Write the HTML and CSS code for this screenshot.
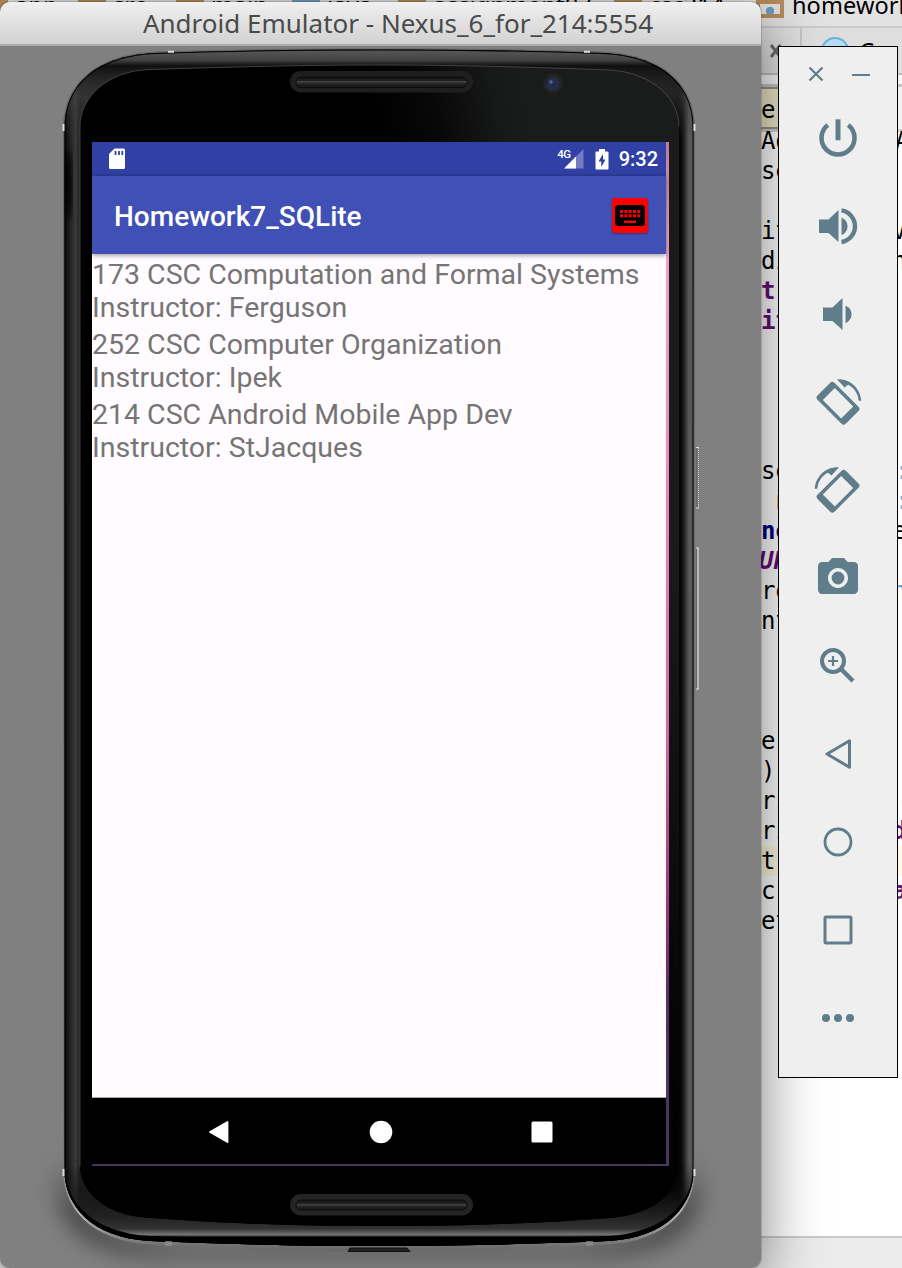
FILE: index.html
```html
<!DOCTYPE html>
<html lang="en">
<head>
<meta charset="utf-8">
<title>Android Emulator</title>
<link rel="stylesheet" href="styles.css">
</head>
<body>
<div class="desktop">
  <div class="ide">
    <div class="crumbs">
      <span class="crumb crumb-app">app</span><span class="crumb crumb-src">src</span><span class="crumb crumb-main">main</span><span class="crumb crumb-java java">java</span><span class="crumb crumb-pkg">assignment07</span><span class="crumb crumb-csc">csc214</span><span class="crumb crumb-last">homework</span>
    </div>
    <div class="tabs">
      <span class="tab-close"><svg width="12" height="14" viewBox="0 0 12 14"><path d="M1 1l9.500 12M10.500 1L1 13" stroke="#6b6b6b" stroke-width="3" fill="none"/></svg></span>
      <span class="tab"><i class="class-dot"></i>C</span>
    </div>
    <div class="gap-bar"></div>
    <div class="method-bar"><span class="method">e</span></div>
    <div class="code">
      <div class="line"><span>Ad</span><span>Ac</span></div>
      <div class="line"><span>se</span><span class="nudge">r</span></div>
      <div class="line"></div>
      <div class="line"><span>it</span><span class="back">V</span></div>
      <div class="line"><span>di</span><span class="back">nV</span></div>
      <div class="line"><span class="field">t</span><span class="nudge">'c</span></div>
      <div class="line"><span class="field">it</span><span class="nudge">'T</span></div>
      <div class="line"></div><div class="line"></div><div class="line"></div><div class="line"></div>
      <div class="line"><span>se</span><span class="str">:</span></div>
      <div class="line"><span>&nbsp;n</span><span class="str">:</span></div>
      <div class="line"><span class="kw">ne</span><span class="back">e</span></div>
      <div class="line"><span class="const">UR</span><span class="red nudge">r</span></div>
      <div class="line"><span>rg</span><span class="str back">n</span></div>
      <div class="line"><span>nt</span></div>
      <div class="line"></div><div class="line"></div><div class="line"></div>
      <div class="line"><span>e</span></div>
      <div class="line"><span>)</span></div>
      <div class="line"><span>rs</span><span class="tan nudge">c</span></div>
      <div class="line"><span>rs</span><span class="field back">da</span></div>
      <div class="line current"><span>t</span><span class="tan nudge">r</span></div>
      <div class="line"><span>c</span><span class="field back">al</span></div>
      <div class="line"><span>et</span></div>
    </div>
    <div class="ide-status"></div>
  </div>

  <div class="emulator">
    <div class="titlebar"><span class="title">Android Emulator - Nexus_6_for_214:5554</span></div>
    <div class="stage">
      <svg class="body" width="761" height="1223" viewBox="0 45 761 1223">
        <defs>
          <linearGradient id="side" gradientUnits="userSpaceOnUse" x1="64" y1="0" x2="694" y2="0">
            <stop offset="0" stop-color="#050505"/><stop offset=".006" stop-color="#161616"/><stop offset=".018" stop-color="#3a3a3a"/><stop offset=".025" stop-color="#222"/>
            <stop offset=".5" stop-color="#111"/><stop offset=".975" stop-color="#000"/><stop offset=".982" stop-color="#111"/><stop offset=".992" stop-color="#5c5a58"/><stop offset="1" stop-color="#555"/>
          </linearGradient>
          <linearGradient id="ends" gradientUnits="userSpaceOnUse" x1="0" y1="49" x2="0" y2="1248">
            <stop offset="0" stop-color="#5a5a5a"/><stop offset=".009" stop-color="#444"/><stop offset=".014" stop-color="#101010"/><stop offset=".04" stop-color="#444" stop-opacity=".5"/><stop offset=".075" stop-color="#333" stop-opacity="0"/>
            <stop offset=".93" stop-color="#000" stop-opacity="0"/><stop offset=".974" stop-color="#222"/><stop offset=".984" stop-color="#333"/><stop offset=".989" stop-color="#777"/><stop offset=".991" stop-color="#000"/><stop offset="1" stop-color="#000"/>
          </linearGradient>
          <linearGradient id="glass" gradientUnits="userSpaceOnUse" x1="380" y1="150" x2="530" y2="120">
            <stop offset="0" stop-color="#000"/><stop offset=".4" stop-color="#070807"/><stop offset=".8" stop-color="#171918"/><stop offset="1" stop-color="#1a1c1b"/>
          </linearGradient>
          <linearGradient id="glassFade" x1="0" y1="0" x2="0" y2="1">
            <stop offset=".4" stop-color="#000" stop-opacity="0"/><stop offset=".85" stop-color="#000" stop-opacity=".85"/><stop offset="1" stop-color="#000"/>
          </linearGradient>
          <linearGradient id="rim" x1="0" y1="0" x2="0" y2="1">
            <stop offset="0" stop-color="#666"/><stop offset=".93" stop-color="#777"/><stop offset=".97" stop-color="#b5b5b5"/><stop offset="1" stop-color="#666"/>
          </linearGradient>
          <linearGradient id="grille" x1="0" y1="0" x2="0" y2="1">
            <stop offset="0" stop-color="#111"/><stop offset=".35" stop-color="#222"/><stop offset=".4" stop-color="#464646"/><stop offset=".7" stop-color="#202020"/><stop offset="1" stop-color="#151515"/>
          </linearGradient>
          <filter id="soft" x="-20%" y="-60%" width="140%" height="220%"><feGaussianBlur stdDeviation="12"/></filter>
          <filter id="tiny" x="-10%" y="-10%" width="120%" height="120%"><feGaussianBlur stdDeviation="4"/></filter>
          <clipPath id="shell"><path d="M64.500 128C64.500 88 92 56 155 53C230 50.500 300 49.500 379 49.500S528 50.500 603 53C666 56 693.500 88 693.500 128V1170C693.500 1205 667 1238 608 1241C530 1244 460 1246 379 1246S228 1244 150 1241C91 1238 64.500 1205 64.500 1170Z"/></clipPath>
        </defs>
        <path d="M62 1155C72 1225 110 1242 180 1247H578C648 1242 686 1225 696 1155V1205Q680 1253 590 1254H168Q78 1253 62 1205Z" fill="#000" opacity=".65" filter="url(#soft)"/>
        <path d="M63 128C63 87 91 55 155 51.500C230 49 300 48.500 379 48.500S528 49 603 51.500C667 55 695 87 695 128V1170C695 1207 668 1241 608 1244.500C530 1248 460 1251 379 1251S228 1248 150 1244.500C90 1241 63 1207 63 1170Z" fill="url(#rim)"/>
        <g clip-path="url(#shell)">
          <rect x="64" y="49" width="630" height="1200" fill="url(#side)"/>
          <rect x="64" y="49" width="630" height="1200" fill="url(#ends)"/>
          <ellipse cx="67" cy="185" rx="5" ry="36" fill="#000" filter="url(#tiny)"/>
          <path d="M64.500 128C64.500 88 92 56 155 53C230 50.500 300 49.500 379 49.500S528 50.500 603 53C666 56 693.500 88 693.500 128V1170C693.500 1205 667 1238 608 1241C530 1244 460 1246 379 1246S228 1244 150 1241C91 1238 64.500 1205 64.500 1170Z" fill="none" stroke="#000" stroke-width="2"/>
          <path d="M64 1168C66 1203 94 1233 150 1236C228 1238 300 1239.500 379 1239.500S530 1238 608 1236C664 1233 692 1203 694 1168V1250H64Z" fill="#000"/>
        </g>
        <path d="M80 126C80 100 104 71 150 69.500C230 67 300 65 379 65S528 67 610 70C654 73 679 100 679 126V1166C679 1192 655 1214 610 1218C530 1224 460 1226 379 1226S228 1224 140 1217C103 1213 80 1190 80 1166Z" fill="url(#glass)"/>
        <path d="M80 126C80 100 104 71 150 69.500C230 67 300 65 379 65S528 67 610 70C654 73 679 100 679 126V1166C679 1192 655 1214 610 1218C530 1224 460 1226 379 1226S228 1224 140 1217C103 1213 80 1190 80 1166Z" fill="url(#glassFade)"/>
        <path d="M80 1166V126C80 100 104 71 150 69.500C230 67 300 65 379 65S528 67 610 70C654 73 679 100 679 126" fill="none" stroke="#555" stroke-width="1" opacity=".7"/>
        <rect x="290" y="71" width="183" height="21.500" rx="10.700" fill="#1f1f1f"/>
        <rect x="296" y="77" width="171" height="10.500" rx="5" fill="url(#grille)" stroke="#0c0c0c"/>
        <rect x="290" y="1194" width="183" height="21.500" rx="10.700" fill="#242424"/>
        <rect x="296" y="1200" width="171" height="10" rx="5" fill="url(#grille)" stroke="#0c0c0c"/>
        <circle cx="553" cy="83.500" r="10" fill="#222423"/><circle cx="553" cy="84" r="6.700" fill="#252d49"/><circle cx="551" cy="82" r="1.800" fill="#4e6699"/>
        <path d="M168 51.700h6M584 51.700h6M63.500 124v7M694.500 124v7M63.500 1169v7M694.500 1169v7" stroke="#ddd" stroke-width="2"/>
        <path d="M165 1243.500h7M586 1243.500h7" stroke="#888" stroke-width="4.500"/>
        <path d="M348 1251.500L350 1248H407L410 1251.500Z" fill="#222" stroke="#111"/>
        <path d="M696.500 448V508M696.500 548V689" stroke="#666" stroke-width="1.500"/>
        <path d="M698.500 448V508" stroke="#ccc" stroke-width="1" stroke-dasharray="1 1"/>
        <path d="M698 548V689M696 447.500h3M696 508h3M696 548h3M696 689h3" stroke="#e2e2e2" stroke-width="1.200"/>
      </svg>

      <div class="screen">
        <div class="display">
          <div class="status">
            <svg width="18" height="22" viewBox="0 0 18 22"><path d="M6.500 .5H15.500Q17 .5 17 2V19.500Q17 21 15.500 21H2.500Q1 21 1 19.500V6Z" fill="#fff"/><path d="M7.500 3v4M11 3v4M14.300 3v4" stroke="#3040a0" stroke-width="1.800"/></svg>
            <span class="net">4G</span>
            <svg class="signal" width="21" height="20" viewBox="0 0 21 20"><path d="M20.500 0V19.500H1Z" fill="#737cc0"/><path d="M13 7.500V19.500H1Z" fill="#fff"/></svg>
            <svg class="battery" width="14" height="21" viewBox="0 0 14 21"><path d="M4 0H10V2.500H12.500Q13.500 2.500 13.500 3.500V19.500Q13.500 20.500 12.500 20.500H1.500Q.5 20.500 .5 19.500V3.500Q.5 2.500 1.500 2.500H4Z" fill="#fff"/><path d="M8 5L3.500 12.500H6.300V18L10.500 10.500H8Z" fill="#3040a0"/></svg>
            <span class="clock">9:32</span>
          </div>
          <div class="appbar">
            <span class="app-name">Homework7_SQLite</span>
            <span class="key-btn"><svg width="30" height="21" viewBox="0 0 30 21"><rect width="30" height="21" rx="3.500" fill="#000"/><path d="M5 6.500H26M5 10.700H26" stroke="#f00" stroke-width="3" stroke-dasharray="3 1.350"/><path d="M9 16.700H21" stroke="#f00" stroke-width="2.600"/></svg></span>
          </div>
          <div class="list">
            <div class="course"><div>173 CSC Computation and Formal Systems</div><div>Instructor: Ferguson</div></div>
            <div class="course"><div>252 CSC Computer Organization</div><div>Instructor: Ipek</div></div>
            <div class="course"><div>214 CSC Android Mobile App Dev</div><div>Instructor: StJacques</div></div>
          </div>
          <div class="nav">
            <svg width="22" height="24" viewBox="0 0 22 24"><path d="M2 12L19.500 2V22Z" fill="#fff" stroke="#fff" stroke-width="1.800" stroke-linejoin="round"/></svg>
            <svg width="24" height="24" viewBox="0 0 24 24"><circle cx="12" cy="12" r="11.300" fill="#fff"/></svg>
            <svg width="22" height="22" viewBox="0 0 22 22"><rect x=".5" y=".5" width="21" height="21" rx="1.500" fill="#fff"/></svg>
          </div>
        </div>
      </div>
    </div>
  </div>

  <div class="tools">
    <div class="tools-head">
      <svg width="16" height="16" viewBox="0 0 16 16"><path d="M1.500 1.500l13 13M14.500 1.500l-13 13" stroke="#607d8b" stroke-width="2.200"/></svg>
      <svg width="18" height="16" viewBox="0 0 18 16"><path d="M0 9H18" stroke="#607d8b" stroke-width="2"/></svg>
    </div>
    <div class="tool"><svg viewBox="0 0 48 48"><path class="s" stroke-width="4.600" d="M13.800 11A16.500 16.500 0 1 0 34.200 11"/><path class="s" stroke-width="5" d="M24 5.300V26.300"/></svg></div>
    <div class="tool"><svg viewBox="0 0 48 48"><path d="M5 17.500H14.500L24.500 8V40L14.500 31H5Z"/><path d="M27.500 15.500C31 17 33.500 20 33.500 24.200S31 31.500 27.500 33Z"/><path class="s" stroke-width="4.400" d="M27.500 8.400A16 16 0 0 1 27.500 40"/></svg></div>
    <div class="tool"><svg viewBox="0 0 48 48"><path d="M9 17.500H18.500L28.500 8V40L18.500 31H9Z"/><path d="M31.500 15.500C35 17 37.500 20 37.500 24.200S35 31.500 31.500 33Z"/></svg></div>
    <div class="tool"><svg viewBox="0 0 48 48"><g id="rotate"><path fill-rule="evenodd" transform="translate(24 25.200) rotate(45)" d="M-17 -12H17Q20 -12 20 -9V9Q20 12 17 12H-17Q-20 12 -20 9V-9Q-20 -12 -17 -12ZM-13 -8.500V8.500H13V-8.500Z"/><path d="M23 1.300C35 .5 46 9 47.300 22.700H44.700C44 15 39.500 9 34 6.700L30.500 9.500Z"/></g></svg></div>
    <div class="tool"><svg viewBox="0 0 48 48"><use href="#rotate" transform="translate(48 0) scale(-1 1)"/></svg></div>
    <div class="tool"><svg viewBox="0 0 24 24"><circle cx="12" cy="12" r="3.200"/><path d="M9 2L7.170 4H4c-1.100 0-2 .9-2 2v12c0 1.100.9 2 2 2h16c1.100 0 2-.9 2-2V6c0-1.100-.9-2-2-2h-3.170L15 2H9zm3 15c-2.760 0-5-2.240-5-5s2.240-5 5-5 5 2.240 5 5-2.240 5-5 5z"/></svg></div>
    <div class="tool"><svg viewBox="0 0 48 48"><circle class="s" cx="19" cy="19" r="11" stroke-width="4"/><path class="s" stroke-width="4.400" d="M26.500 26.500L39 39"/><path class="s" stroke-width="2.200" d="M14 19H24M19 14V24"/></svg></div>
    <div class="tool"><svg viewBox="0 0 48 48"><path class="s" stroke-width="3" stroke-linejoin="round" d="M13 24L35.500 10.800V37.200Z"/></svg></div>
    <div class="tool"><svg viewBox="0 0 48 48"><circle class="s" cx="24" cy="24" r="13" stroke-width="2.800"/></svg></div>
    <div class="tool"><svg viewBox="0 0 48 48"><rect class="s" x="11" y="11" width="26" height="26" rx="1" stroke-width="3"/></svg></div>
    <div class="tool"><svg viewBox="0 0 48 48"><circle cx="12" cy="24" r="4"/><circle cx="24" cy="24" r="4"/><circle cx="36" cy="24" r="4"/></svg></div>
  </div>
</div>
</body>
</html>
```

FILE: styles.css
```css
body { margin: 0; }
.desktop { position: relative; width: 902px; height: 1268px; overflow: hidden; background: #fff; }
.desktop svg { display: block; flex: none; }

/* editor window behind the emulator */
.ide { display: flex; flex-direction: column; height: 1268px; font-family: "DejaVu Sans Mono", monospace; font-size: 24px; color: #000; }
.crumbs { display: flex; height: 28px; box-sizing: border-box; background: #e2e2e2; border-bottom: 2px solid #c9c9c9; font: 24px/28px "Noto Sans", "Open Sans", sans-serif; overflow: hidden; }
.crumb { display: flex; box-sizing: border-box; flex: none; white-space: nowrap; line-height: 10px; }
.crumb::before { content: ""; box-sizing: border-box; width: 28px; height: 18px; flex: none; margin-right: 7px; background: #b88c5c; }
.java::before { background: #6e9fc0; }
.crumb-app { width: 98px; padding-left: 0; margin-left: -20px; }
.crumb-src { width: 98px; }
.crumb-main { width: 116px; }
.crumb-java { width: 106px; }
.crumb-pkg { width: 216px; }
.crumb-csc { width: 142px; }
.crumb-last { font-size: 23.500px; letter-spacing: .1px; }
.crumb-last::before { background: radial-gradient(circle at 10px 7px, #6ca0c4 4px, #e2e2e2 4.500px); border: 4px solid #b88c5c; margin-right: 8px; margin-left: 0; }
.tabs { display: flex; align-items: center; height: 47px; box-sizing: border-box; padding-left: 770px; background: #dedede; border-bottom: 2px solid #bdbdbd; }
.tab-close { width: 30px; height: 100%; display: flex; align-items: center; border-right: 2px solid #c4c4c4; }
.tab { display: flex; align-items: center; gap: 10px; padding-left: 19px; font: 24px "Noto Sans", sans-serif; }
.class-dot { width: 24px; height: 24px; border-radius: 50%; border: 2px solid #6fb0dc; background: #b3def5; }
.gap-bar { height: 12px; box-sizing: border-box; background: #f6f6f6; border-bottom: 3px solid #c4c4c4; }
.method-bar { height: 45px; box-sizing: border-box; padding-left: 761px; border-bottom: 3px solid #d0d0d0; background: #f2f2f2; }
.method { display: block; box-sizing: border-box; width: 60px; height: 42px; border: 2px solid #96967e; border-left: 0; background: #e9e8c8; line-height: 42px; }
.code { flex: 1; padding-left: 761px; margin-top: -6px; }
.line { display: grid; grid-template-columns: 134px 1fr; height: 30px; line-height: 30px; white-space: pre; overflow: hidden; }
.line > span { overflow: hidden; }
.line > .nudge { padding-left: 5px; }
.line > .back { text-indent: -3px; }
.field { color: #660e7a; font-weight: bold; }
.const { color: #660e7a; font-weight: bold; font-style: italic; text-indent: -2px; }
.kw { color: #000080; font-weight: bold; }
.str { color: #5da2d6; }
.red { color: #8b0000; }
.tan { color: #b08a4a; }
.current { background: #fffae3; }
.ide-status { height: 32px; box-sizing: border-box; border-top: 2px solid #cbcbcb; background: #ececec; }

/* emulator window */
.emulator { position: absolute; left: 0; top: 2px; width: 761px; height: 1266px; display: flex; flex-direction: column; border-radius: 10px; overflow: hidden; background: #808080; }
.emulator { box-shadow: 0 16px 62px rgba(0,0,0,.52), 0 0 1px 1px rgba(0,0,0,.15); }
.titlebar { height: 44px; box-sizing: border-box; border-bottom: 2px solid #aaa; background: linear-gradient(#f0f0f0, #d2d2d2); display: flex; align-items: center; justify-content: center; padding-left: 35px; }
.title { font: 26px/42px "Noto Sans", "Open Sans", sans-serif; color: #4a4a4a; white-space: nowrap; }
.stage { position: relative; flex: 1; padding: 96px 0 0 92px; }
.body { position: absolute; left: 0; top: -1px; }
.screen { position: relative; width: 577px; height: 1024px; box-sizing: border-box; padding: 0 3px 2px 0; background: linear-gradient(#b97b96 0, #eca4cc 90px, #e98abb 320px, #d065a0 600px, #8b2d7a 800px, #54306a 850px, #4a3560 1024px); }
.display { display: flex; flex-direction: column; height: 1022px; background: #fffbff; font-family: Roboto, sans-serif; }
.status { display: flex; height: 34px; padding: 0 8px 0 16px; align-items: center; background: #3040a5; color: #fff; }
.net { margin-left: auto; align-self: flex-start; font-size: 11.500px; font-weight: 500; line-height: 24px; letter-spacing: -.5px; margin-right: -8px; }
.signal { margin-right: 11px; }
.battery { margin-right: 10px; }
.clock { font-size: 20px; font-weight: 500; line-height: 34px; }
.appbar { display: flex; align-items: center; justify-content: space-between; height: 78px; padding: 0 18px 0 22px; background: #4150b5; color: #fff; box-shadow: 0 1px 5px rgba(0,0,0,.45); z-index: 1; }
.app-name { font-size: 28px; font-weight: 500; line-height: 34px; padding-top: 3px; }
.key-btn { width: 36px; height: 35px; display: flex; align-items: center; justify-content: center; border-radius: 3px; background: #f00; box-shadow: 0 1px 2px rgba(0,0,0,.35); }
.list { flex: 1; padding-top: 4px; font-size: 28.500px; line-height: 33px; color: #757575; white-space: nowrap; }
.course { height: 70px; }
.nav { display: flex; height: 65px; align-items: center; justify-content: space-between; padding: 1px 113px 0 116px; background: #000; border-top: 1px solid #aaa; }

/* emulator side toolbar */
.tools { position: absolute; left: 778px; top: 46px; width: 120px; height: 1032px; box-sizing: border-box; border: 1px solid #000; background: #efefef; }
.tools-head { display: flex; justify-content: space-between; height: 37px; align-items: flex-end; height: 35px; padding: 0 27px 0 29px; margin-bottom: 12px; }
.tool { display: flex; align-items: center; justify-content: center; height: 88px; }
.tool svg { width: 48px; height: 48px; fill: #607d8b; }
.s { fill: none; stroke: #607d8b; }
```
